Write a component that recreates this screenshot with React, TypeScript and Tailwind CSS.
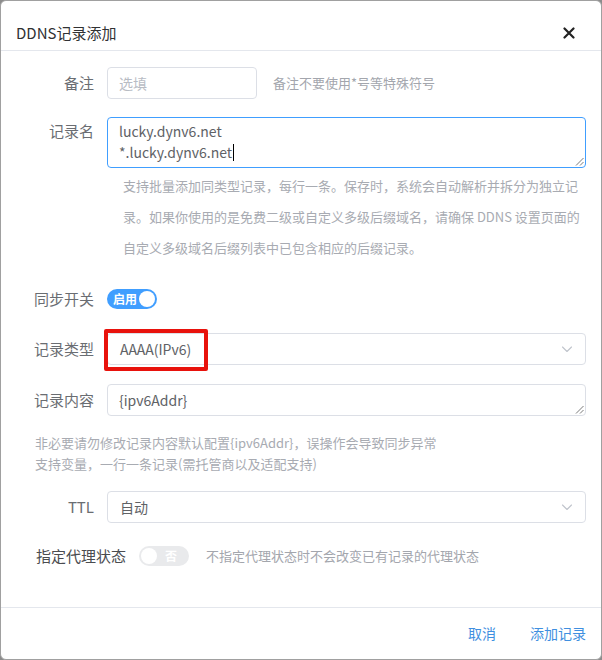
import React from "react";

function Chevron() {
  return (
    <svg width="12" height="12" viewBox="0 0 12 12" fill="none">
      <path d="M1.5 4 L6 8.5 L10.5 4" stroke="#c0c4cc" strokeWidth="1.1" strokeLinecap="round" strokeLinejoin="round" />
    </svg>
  );
}

function Grip() {
  return (
    <svg width="9" height="9" viewBox="0 0 9 9" className="absolute right-[1px] bottom-[1px]">
      <path d="M8.5 1 L1 8.5 M8.5 5 L5 8.5" stroke="#7a7a7a" strokeWidth="1" />
    </svg>
  );
}

function Label({ children }: { children: React.ReactNode }) {
  return (
    <div className="w-[91px] shrink-0 pr-[13px] text-right text-[15px] text-[#6a6d72] leading-[32px]">
      {children}
    </div>
  );
}

export default function App() {
  return (
    <div className="w-[602px] h-[660px] bg-[#8c8c8c] font-['Noto_Sans_CJK_SC','Noto_Sans',sans-serif]">
      <div className="w-full h-full bg-white border border-[#a0a0a0] rounded-[6px] flex flex-col overflow-hidden">
        {/* header */}
        <div className="h-[50px] shrink-0 border-b border-[#e4e7ed] flex items-end justify-between pl-[15px] pr-[26px] pb-[8px]">
          <div className="text-[15px] leading-[18px] text-[#303133]">DDNS记录添加</div>
          <svg width="12" height="12" viewBox="0 0 12 12" className="mb-[3px]">
            <path d="M1.5 1.5 L10.5 10.5 M10.5 1.5 L1.5 10.5" stroke="#222" strokeWidth="2.2" strokeLinecap="round" />
          </svg>
        </div>

        {/* body */}
        <div className="flex-1 pl-[15px] pr-[15px] pt-[16px]">
          {/* 备注 */}
          <div className="flex items-center h-[32px]">
            <Label>备注</Label>
            <div className="w-[150px] h-[32px] border border-[#dcdfe6] rounded-[4px] px-[11px] flex items-center text-[14px] text-[#b8bcc4]">
              选填
            </div>
            <div className="ml-[16px] text-[13px] text-[#a3a6ad]">备注不要使用*号等特殊符号</div>
          </div>

          {/* 记录名 */}
          <div className="flex mt-[18px]">
            <div className="w-[91px] shrink-0 pr-[13px] text-right text-[15px] text-[#6a6d72] leading-[28px]">记录名</div>
            <div className="relative flex-1 h-[51px] border border-[#409eff] rounded-[4px] px-[11px] pt-[3px] text-[14px] leading-[21px] text-[#606266]">
              <div>lucky.dynv6.net</div>
              <div className="flex items-center">
                *.lucky.dynv6.net<span className="inline-block w-px h-[17px] bg-black ml-[1px]" />
              </div>
              <Grip />
            </div>
          </div>
          <div className="ml-[92px] pl-[15px] mt-[2px] text-[13px] leading-[31px] text-[#a8abb2] whitespace-nowrap">
            <div>支持批量添加同类型记录，每行一条。保存时，系统会自动解析并拆分为独立记</div>
            <div>录。如果你使用的是免费二级或自定义多级后缀域名，请确保 DDNS 设置页面的</div>
            <div>自定义多级域名后缀列表中已包含相应的后缀记录。</div>
          </div>

          {/* 同步开关 */}
          <div className="flex items-center h-[32px] mt-[20px]">
            <Label>同步开关</Label>
            <div className="w-[50px] h-[20px] rounded-full bg-[#409eff] flex items-center justify-between pl-[6px] pr-[2px]">
              <span className="text-[12px] leading-none text-white font-bold">启用</span>
              <span className="w-[16px] h-[16px] rounded-full bg-white" />
            </div>
          </div>

          {/* 记录类型 */}
          <div className="flex items-center h-[32px] mt-[18px]">
            <Label>记录类型</Label>
            <div className="relative flex-1 h-[32px] border border-[#dcdfe6] rounded-[4px] pl-[12px] pr-[12px] flex items-center justify-between text-[14px] text-[#606266]">
              <span>AAAA(IPv6)</span>
              <Chevron />
              <div className="absolute left-[-4px] top-[-5px] w-[104px] h-[42px] border-[4px] border-[#e8120c] rounded-[2px]" />
            </div>
          </div>

          {/* 记录内容 */}
          <div className="flex items-center h-[32px] mt-[19px]">
            <Label>记录内容</Label>
            <div className="relative flex-1 h-[32px] border border-[#dcdfe6] rounded-[4px] px-[11px] flex items-center text-[14px] text-[#606266]">
              {"{ipv6Addr}"}
              <Grip />
            </div>
          </div>
          <div className="pl-[19px] mt-[16px] text-[13px] leading-[21px] text-[#a8abb2] whitespace-nowrap">
            <div>非必要请勿修改记录内容默认配置{"{ipv6Addr}"}，误操作会导致同步异常</div>
            <div>支持变量，一行一条记录(需托管商以及适配支持)</div>
          </div>

          {/* TTL */}
          <div className="flex items-center h-[32px] mt-[17px]">
            <Label>TTL</Label>
            <div className="flex-1 h-[32px] border border-[#dcdfe6] rounded-[4px] pl-[12px] pr-[12px] flex items-center justify-between text-[14px] text-[#606266]">
              <span>自动</span>
              <Chevron />
            </div>
          </div>

          {/* 指定代理状态 */}
          <div className="flex items-center h-[32px] mt-[17px]">
            <div className="pl-[20px] pr-[13px] text-[15px] text-[#4a4c50] leading-[32px]">指定代理状态</div>
            <div className="w-[50px] h-[20px] rounded-full bg-[#e9eaec] flex items-center justify-between pl-[2px] pr-[12px]">
              <span className="w-[16px] h-[16px] rounded-full bg-white" />
              <span className="text-[12px] leading-none text-white font-bold">否</span>
            </div>
            <div className="ml-[17px] text-[13px] text-[#a3a6ad]">不指定代理状态时不会改变已有记录的代理状态</div>
          </div>
        </div>

        {/* footer */}
        <div className="h-[52px] shrink-0 border-t border-[#e4e7ed] flex items-center justify-end pr-[15px] gap-[34px] text-[14px] text-[#3f8fe0]">
          <span>取消</span>
          <span>添加记录</span>
        </div>
      </div>
    </div>
  );
}
